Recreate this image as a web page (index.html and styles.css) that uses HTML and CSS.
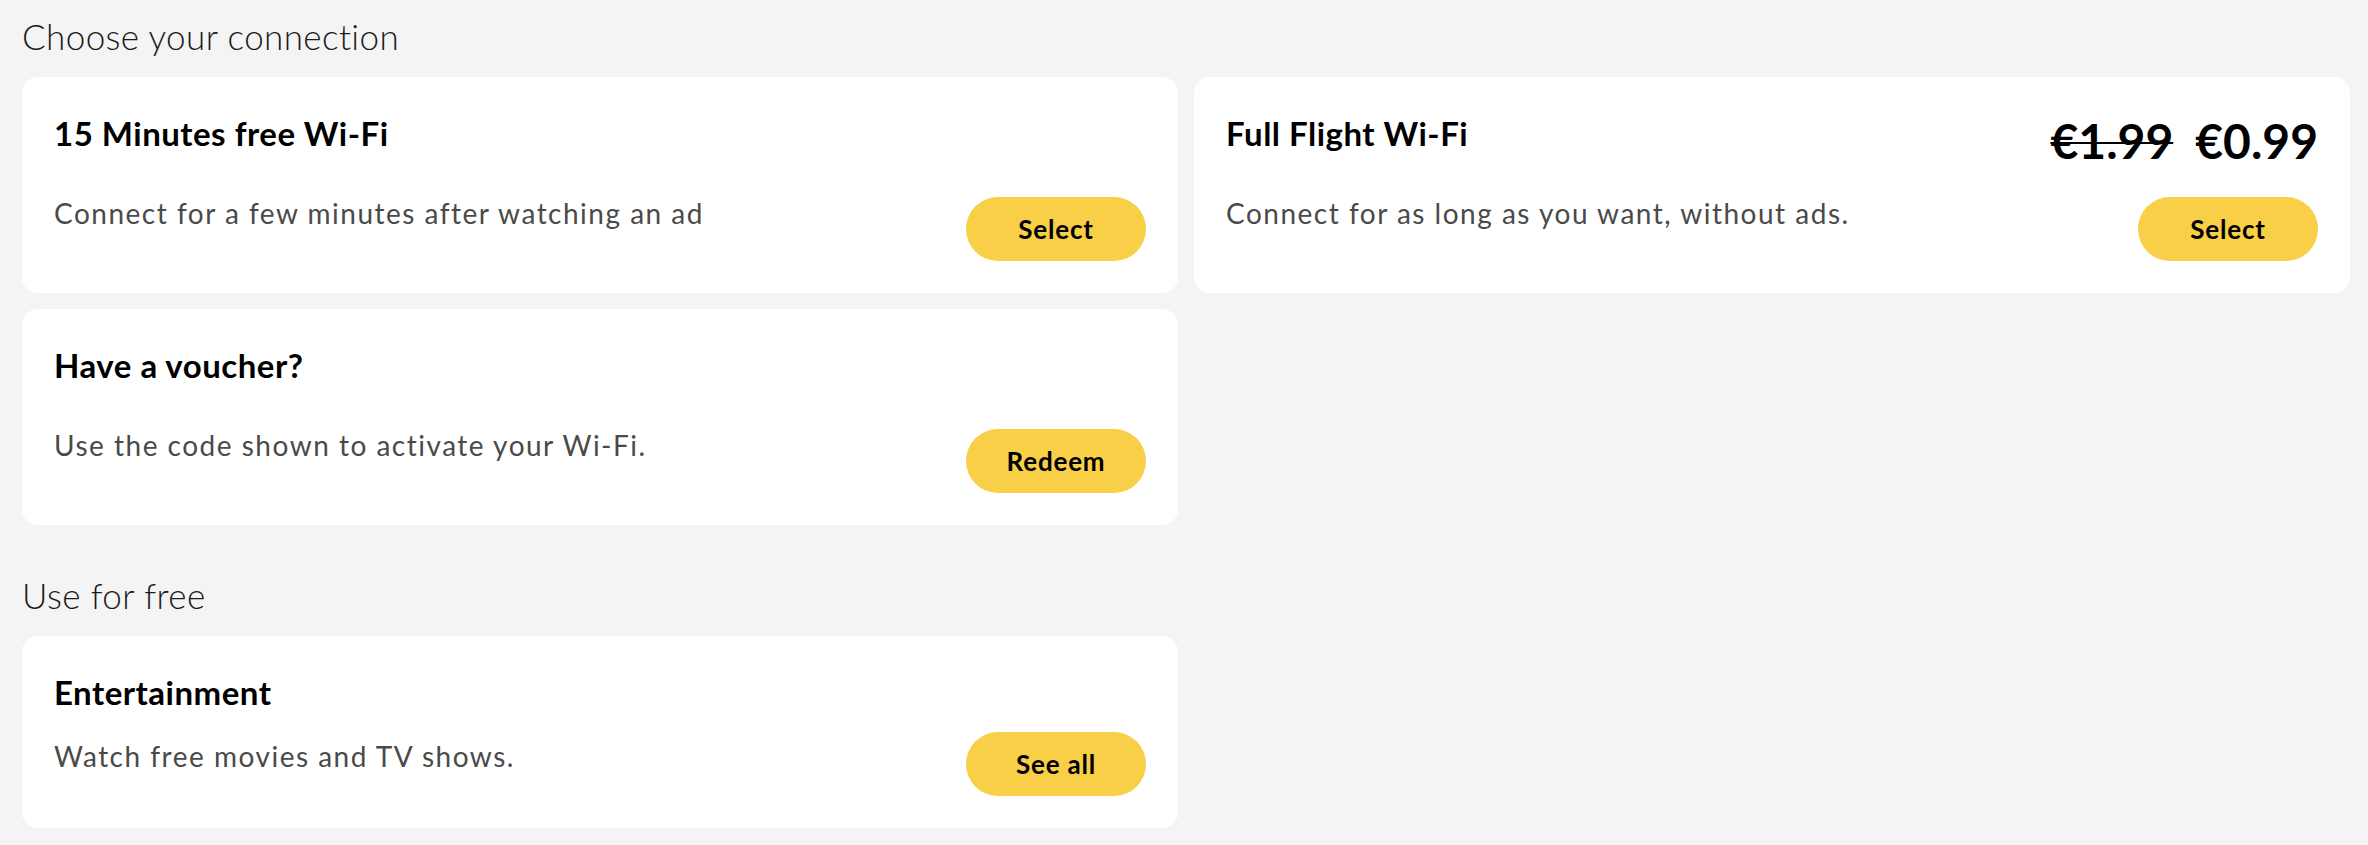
FILE: index.html
```html
<!DOCTYPE html>
<html lang="en">
<head>
<meta charset="utf-8">
<title>Wi-Fi</title>
<link rel="stylesheet" href="styles.css">
</head>
<body>
<main class="page">
  <h2 class="section-title">Choose your connection</h2>
  <div class="grid">
    <section class="card">
      <div class="card-head">
        <h3 class="card-title">15 Minutes free Wi-Fi</h3>
      </div>
      <div class="card-body">
        <p class="card-desc">Connect for a few minutes after watching an ad</p>
        <button class="btn">Select</button>
      </div>
    </section>
    <section class="card">
      <div class="card-head">
        <h3 class="card-title">Full Flight Wi-Fi</h3>
        <div class="price"><s class="price-old">€1.99</s><span class="price-new">€0.99</span></div>
      </div>
      <div class="card-body">
        <p class="card-desc">Connect for as long as you want, without ads.</p>
        <button class="btn">Select</button>
      </div>
    </section>
    <section class="card">
      <div class="card-head">
        <h3 class="card-title">Have a voucher?</h3>
      </div>
      <div class="card-body">
        <p class="card-desc">Use the code shown to activate your Wi-Fi.</p>
        <button class="btn">Redeem</button>
      </div>
    </section>
  </div>

  <h2 class="section-title section-title--spaced">Use for free</h2>
  <div class="grid">
    <section class="card card--compact">
      <div class="card-head">
        <h3 class="card-title">Entertainment</h3>
      </div>
      <div class="card-body">
        <p class="card-desc">Watch free movies and TV shows.</p>
        <button class="btn">See all</button>
      </div>
    </section>
  </div>
</main>
</body>
</html>
```

FILE: styles.css
```css
* { box-sizing: border-box; }

html, body {
  margin: 0;
  padding: 0;
  background: #f4f4f4;
}

body {
  font-family: "Lato", "Noto Sans", sans-serif;
  color: #000;
}

.page {
  padding: 16px 18px 16px 22px;
}

.section-title {
  margin: 0 0 21px;
  font-size: 35px;
  line-height: 40px;
  font-weight: 300;
  letter-spacing: 0.4px;
  color: #1a1a1a;
}

.section-title--spaced {
  margin-top: 50px;
  margin-bottom: 21px;
}

.grid {
  display: grid;
  grid-template-columns: 1156px 1156px;
  gap: 16px;
}

.card {
  display: flex;
  flex-direction: column;
  background: #fff;
  border-radius: 16px;
  padding: 32px;
}

.card-head {
  display: flex;
  justify-content: space-between;
  align-items: flex-start;
  min-height: 64px;
  margin-bottom: 24px;
}

.card-title {
  margin: 0;
  font-size: 33px;
  line-height: 48px;
  font-weight: 700;
  letter-spacing: 0.5px;
}

.price {
  display: flex;
  gap: 22px;
  font-size: 48px;
  line-height: 64px;
  font-weight: 700;
}

.price-old {
  text-decoration-thickness: 2px;
}

.card-body {
  display: flex;
  justify-content: space-between;
  align-items: flex-start;
}

.card-desc {
  margin: 0;
  font-size: 28px;
  line-height: 32px;
  letter-spacing: 1.5px;
  color: #4a4a4a;
}

.btn {
  flex: none;
  width: 180px;
  height: 64px;
  border: 0;
  border-radius: 32px;
  background: #f8cf46;
  font-family: inherit;
  font-size: 26px;
  font-weight: 700;
  letter-spacing: 0.8px;
  color: #000;
  cursor: pointer;
}

.card--compact .card-head {
  min-height: 48px;
  margin-bottom: 16px;
}

.card--compact .card-desc {
  padding-top: 8px;
}
```
